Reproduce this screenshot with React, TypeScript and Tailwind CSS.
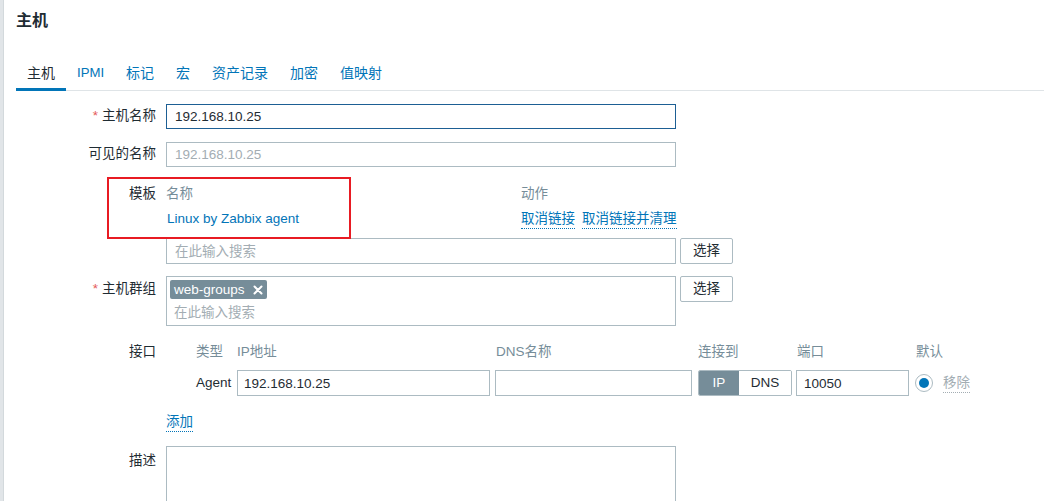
import React from 'react';

const font = { fontFamily: '"Liberation Sans", "Noto Sans CJK SC", sans-serif' };

const tabs = ['主机', 'IPMI', '标记', '宏', '资产记录', '加密', '值映射'];

const Label: React.FC<{ text: string; required?: boolean; className?: string }> = ({ text, required, className }) => (
    <div className={`w-[156px] shrink-0 text-right text-[#1f2c33] ${className || ''}`}>
        {required && <span className="text-[#e45959] mr-[4px]">*</span>}
        {text}
    </div>
);

const SelectButton: React.FC = () => (
    <button className="ml-[4px] w-[53px] h-[26px] border border-[#acbbc2] rounded-[2px] bg-white text-[#1f2c33] text-[13.5px] leading-none">
        选择
    </button>
);

export default function App() {
    return (
        <div style={font} className="w-[1044px] h-[501px] overflow-hidden bg-white flex text-[13.5px]">
            {/* 左侧背景条 */}
            <div className="w-[4px] shrink-0 bg-[#e1e5e8] border-r border-[#d3d9dc]" />

            <div className="flex-1 relative">
                <h1 className="ml-[12px] pt-[10px] leading-[22px] text-[16px] font-bold text-[#1f2c33]">主机</h1>

                {/* 标签页 */}
                <div className="ml-[12px] mt-[31px] flex border-b border-[#dfe4e7]">
                    {tabs.map((t, i) => (
                        <div
                            key={t}
                            className={`px-[11px] leading-[20px] pb-[5px] -mb-px border-b-[3px] ${
                                t === 'IPMI' ? 'text-[13.2px]' : 'text-[14px]'
                            } ${i === 0 ? 'border-[#0275b8] text-[#1f2c33]' : 'border-transparent text-[#0275b8]'}`}
                        >
                            {t}
                        </div>
                    ))}
                </div>

                <div className="-ml-[4px]">
                    {/* 主机名称 */}
                    <div className="mt-[13px] flex items-center h-[25px]">
                        <Label text="主机名称" required />
                        <input
                            readOnly
                            value="192.168.10.25"
                            className="ml-[10px] w-[510px] h-[25px] border border-[#1d5f94] px-[8px] text-[13.5px] text-[#1f2c33] outline-none"
                        />
                    </div>

                    {/* 可见的名称 */}
                    <div className="mt-[13px] flex items-center h-[25px]">
                        <Label text="可见的名称" />
                        <input
                            readOnly
                            placeholder="192.168.10.25"
                            className="ml-[10px] w-[510px] h-[25px] border border-[#acbbc2] px-[8px] text-[13.5px] placeholder:text-[#a3adb3] outline-none"
                        />
                    </div>

                    {/* 模板 */}
                    <div className="mt-[14px] flex">
                        <Label text="模板" className="leading-[26px]" />
                        <div className="ml-[10px]">
                            <div className="flex h-[26px] items-center text-[#768d99]">
                                <div className="w-[355px]">名称</div>
                                <div>动作</div>
                            </div>
                            <div className="flex h-[24px] items-center">
                                <div className="w-[355px] text-[#0275b8] pl-[1px]">Linux by Zabbix agent</div>
                                <div className="flex gap-[7px] text-[#0275b8]">
                                    <span className="border-b border-dotted border-[#0275b8] leading-[18px]">取消链接</span>
                                    <span className="border-b border-dotted border-[#0275b8] leading-[18px]">取消链接并清理</span>
                                </div>
                            </div>
                            <div className="mt-[7px] flex">
                                <input
                                    readOnly
                                    placeholder="在此输入搜索"
                                    className="w-[510px] h-[26px] border border-[#acbbc2] px-[8px] text-[13.5px] placeholder:text-[#a3adb3] outline-none"
                                />
                                <SelectButton />
                            </div>
                        </div>
                    </div>

                    {/* 主机群组 */}
                    <div className="mt-[12px] flex">
                        <Label text="主机群组" required className="leading-[26px]" />
                        <div className="ml-[10px] flex items-start">
                            <div className="w-[510px] h-[50px] border border-[#acbbc2] px-[3px] pt-[3px]">
                                <span className="inline-flex items-center h-[19px] px-[4px] rounded-[2px] bg-[#768d99] text-white leading-none">
                                    web-groups
                                    <svg className="ml-[8px] w-[10px] h-[10px]" viewBox="0 0 10 10">
                                        <path d="M1.5 1.5l7 7M8.5 1.5l-7 7" stroke="white" strokeWidth="2" strokeLinecap="round" />
                                    </svg>
                                </span>
                                <div className="pl-[4px] mt-[2px] leading-[22px] text-[#a3adb3]">在此输入搜索</div>
                            </div>
                            <SelectButton />
                        </div>
                    </div>

                    {/* 接口 */}
                    <div className="mt-[14px] flex">
                        <Label text="接口" className="leading-[24px]" />
                        <div className="ml-[40px]">
                            <div className="flex h-[24px] items-center text-[#768d99]">
                                <div className="w-[41px]">类型</div>
                                <div className="w-[253px]">IP地址</div>
                                <div className="ml-[6px] w-[196px]">DNS名称</div>
                                <div className="ml-[6px] w-[94px]">连接到</div>
                                <div className="ml-[5px] w-[113px]">端口</div>
                                <div className="ml-[6px]">默认</div>
                            </div>
                            <div className="mt-[6px] flex h-[26px] items-center">
                                <div className="w-[41px] text-[#1f2c33]">Agent</div>
                                <input
                                    readOnly
                                    value="192.168.10.25"
                                    className="w-[253px] h-[26px] border border-[#acbbc2] px-[6px] text-[13.5px] text-[#1f2c33] outline-none"
                                />
                                <input
                                    readOnly
                                    value=""
                                    className="ml-[5px] w-[197px] h-[26px] border border-[#acbbc2] px-[6px] outline-none"
                                />
                                <div className="ml-[6px] flex w-[94px] h-[26px] rounded-[2px] border border-[#acbbc2] overflow-hidden">
                                    <div className="w-[40px] bg-[#768d99] text-white flex items-center justify-center">IP</div>
                                    <div className="flex-1 bg-white text-[#1f2c33] flex items-center justify-center">DNS</div>
                                </div>
                                <input
                                    readOnly
                                    value="10050"
                                    className="ml-[4px] w-[113px] h-[26px] border border-[#acbbc2] px-[7px] text-[13.5px] text-[#1f2c33] outline-none"
                                />
                                <div className="ml-[6px] w-[18px] h-[18px] rounded-full border border-[#acbbc2] flex items-center justify-center">
                                    <div className="w-[10px] h-[10px] rounded-full bg-[#0275b8]" />
                                </div>
                                <span className="ml-[10px] text-[#a3adb3] border-b border-dotted border-[#a3adb3] leading-[18px]">移除</span>
                            </div>
                        </div>
                    </div>

                    {/* 添加 */}
                    <div className="mt-[16px] flex h-[20px] items-center">
                        <div className="w-[156px] shrink-0" />
                        <span className="ml-[10px] text-[#0275b8] border-b border-dotted border-[#0275b8] leading-[18px]">添加</span>
                    </div>

                    {/* 描述 */}
                    <div className="mt-[14px] flex">
                        <Label text="描述" className="leading-[26px] pt-[2px]" />
                        <textarea readOnly className="ml-[10px] w-[510px] h-[80px] border border-[#acbbc2] outline-none resize-none" />
                    </div>
                </div>

                {/* 红色标注框 */}
                <div className="absolute left-[103px] top-[177px] w-[244px] h-[62px] border-2 border-[#e81b23] pointer-events-none" />
            </div>
        </div>
    );
}
